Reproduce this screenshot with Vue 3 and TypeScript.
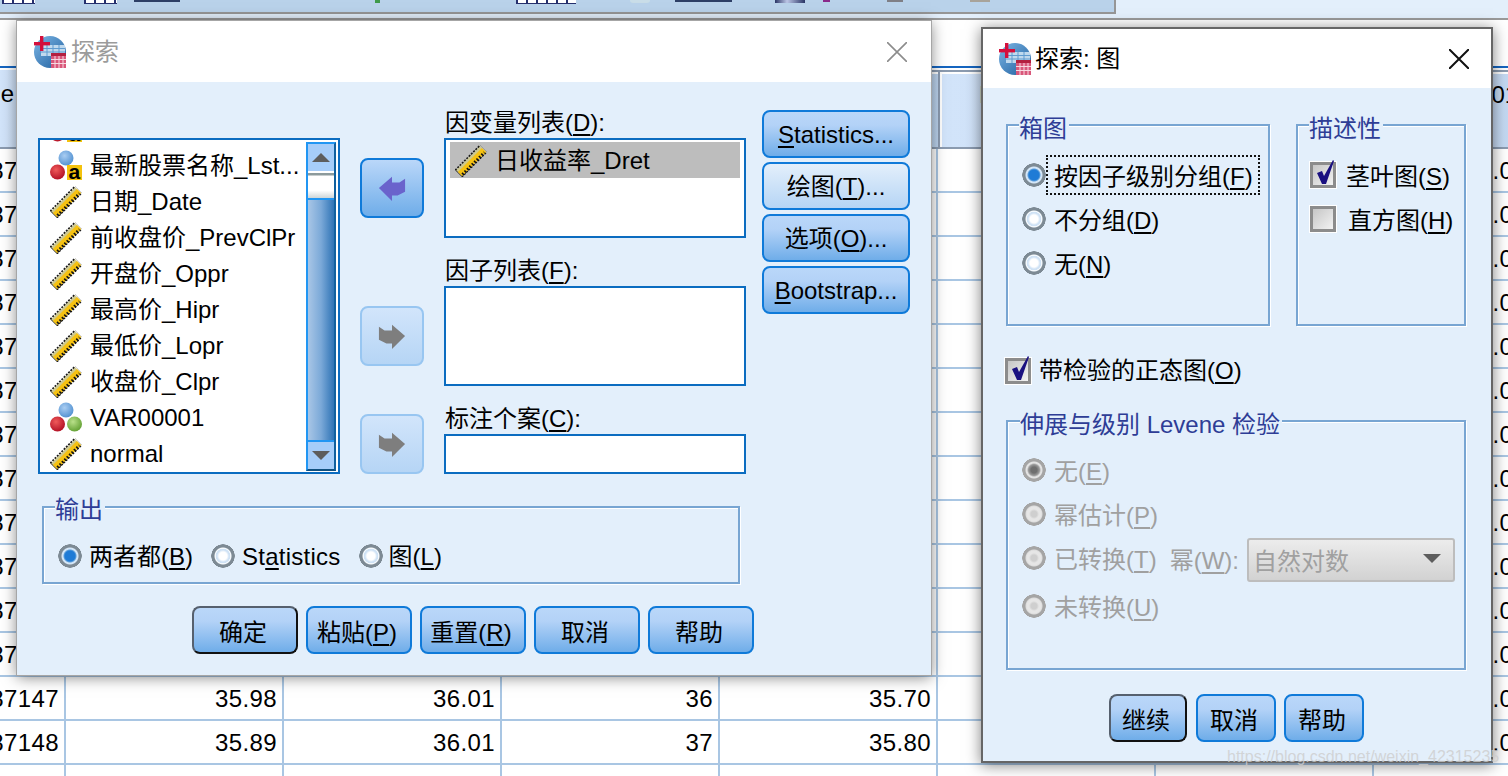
<script setup lang="ts">
interface Row { id: number; cells: string[] }
interface Item { icon: string; text: string }

const headers: string[] = ['Name', '', '', '', '', 'Dmrtnd_Dret', '', 'VAR00001']
const second: string[] = ['34', '32', '33', '34', '35', '35', '36', '37', '33', '39', '30', '35', '32', '33']
const rows: Row[] = second.map((d, i) => ({
  id: 87135 + i,
  cells: i === 12
    ? ['35.98', '36.01', '36', '35.70', '', '', d + '.01']
    : i === 13
      ? ['35.89', '36.01', '37', '35.80', '', '', d + '.01']
      : ['', '', '', '', '', '', d + '.01']
}))

const items: Item[] = [
  { icon: '#nom-a', text: '最新股票名称_Lst...' },
  { icon: '#ruler', text: '日期_Date' },
  { icon: '#ruler', text: '前收盘价_PrevClPr' },
  { icon: '#ruler', text: '开盘价_Oppr' },
  { icon: '#ruler', text: '最高价_Hipr' },
  { icon: '#ruler', text: '最低价_Lopr' },
  { icon: '#ruler', text: '收盘价_Clpr' },
  { icon: '#nom', text: 'VAR00001' },
  { icon: '#ruler', text: 'normal' }
]
</script>

<template>
  <div class="page">
    <svg class="defs" aria-hidden="true">
      <defs>
        <linearGradient id="ball" x1="0" y1="0" x2="1" y2="1">
          <stop offset="0" stop-color="#7db7e6" />
          <stop offset="1" stop-color="#1c5c9c" />
        </linearGradient>
        <radialGradient id="blue" cx=".4" cy=".35" r=".7">
          <stop offset="0" stop-color="#a9cdf2" />
          <stop offset="1" stop-color="#4f8fd0" />
        </radialGradient>
        <radialGradient id="red" cx=".4" cy=".35" r=".7">
          <stop offset="0" stop-color="#ef5a5a" />
          <stop offset="1" stop-color="#b00d22" />
        </radialGradient>
        <radialGradient id="green" cx=".4" cy=".35" r=".7">
          <stop offset="0" stop-color="#b9e08a" />
          <stop offset="1" stop-color="#5f9e2f" />
        </radialGradient>
        <symbol id="spss" viewBox="0 0 34 34">
          <circle cx="17" cy="17" r="16" fill="url(#ball)" />
          <rect x="8" y="10" width="24" height="11" fill="#d5e7f6" opacity=".85" />
          <path d="M8 13.5h24M8 17h24M14 10v11M20 10v11M26 10v11" stroke="#5f9bd0" stroke-width="1" />
          <rect x="7" y="1" width="3.4" height="15" fill="#d40f3c" />
          <rect x="1" y="7" width="16" height="3.4" fill="#d40f3c" />
          <rect x="18" y="18" width="15" height="15" fill="#d9577a" />
          <rect x="18" y="18" width="15" height="3" fill="#b3203f" />
          <path d="M18 24.5h15M18 28.5h15M22 21v12M26 21v12M30 21v12" stroke="#f7d9e1" stroke-width="1" />
        </symbol>
        <symbol id="ruler" viewBox="0 0 32 32">
          <path d="M3.5 28.5L28.5 3.5" stroke="#1a1a1a" stroke-width="11" stroke-dasharray="2 1.2" />
          <path d="M4 28L28 4" stroke="#cfc98e" stroke-width="8" />
          <path d="M5 29L29 5" stroke="#f6c212" stroke-width="6" />
          <path d="M7.5 29.5L29.5 7.5" stroke="#111" stroke-width="3" stroke-dasharray="1.6 1.8" />
        </symbol>
        <symbol id="nom-a" viewBox="0 0 32 32">
          <circle cx="16" cy="8" r="7.5" fill="url(#blue)" />
          <circle cx="7.5" cy="22" r="7.5" fill="url(#red)" />
          <rect x="17" y="15" width="15" height="15" fill="#f4c20d" />
          <text x="18.5" y="29" class="badge">a</text>
        </symbol>
        <symbol id="nom" viewBox="0 0 32 32">
          <circle cx="16" cy="8" r="7.5" fill="url(#blue)" />
          <circle cx="7.5" cy="22" r="7.5" fill="url(#red)" />
          <circle cx="24.5" cy="22" r="7.5" fill="url(#green)" />
        </symbol>
        <symbol id="arrow" viewBox="0 0 64 60">
          <path d="M18 30L32 18V24H40L46 20V34L38 38H32V44Z" />
        </symbol>
      </defs>
    </svg>

    <!-- background application window -->
    <div class="band">
      <div class="toolbar">
        <i class="stub grid s1"></i>
        <i class="stub grid s2"></i>
        <i class="stub bar s3"></i>
        <i class="stub tick s4"></i>
        <i class="stub grid s5"></i>
        <i class="stub round s6"></i>
        <i class="stub bar s7"></i>
        <i class="stub mono s8"></i>
        <i class="stub purple s9"></i>
        <i class="stub gray s10"></i>
        <i class="stub tan s11"></i>
      </div>
    </div>
    <div class="blank"></div>
    <div class="blueline"></div>
    <div class="sheet">
      <div v-for="(h, i) in headers" :key="i" class="th">{{ h }}</div>
      <template v-for="r in rows" :key="r.id">
        <div class="td">{{ r.id }}</div>
        <div v-for="(c, i) in r.cells" :key="i" class="td">{{ c }}</div>
      </template>
      <div v-for="n in 8" :key="'e' + n" class="td"></div>
    </div>

    <!-- 探索 -->
    <section class="win main">
      <header class="title dim">
        <svg class="appicon"><use href="#spss" /></svg>
        <span>探索</span>
        <svg class="close" viewBox="0 0 20 20"><path d="M0 0L20 20M20 0L0 20" /></svg>
      </header>
      <div class="body mainbody">
        <div class="top">
          <div class="srcwrap">
            <div class="box src">
              <div class="rows">
                <div class="var ghost"><svg class="vicon"><use href="#nom-a" /></svg></div>
                <div v-for="it in items" :key="it.text" class="var">
                  <svg class="vicon"><use :href="it.icon" /></svg>
                  <span>{{ it.text }}</span>
                </div>
              </div>
              <div class="scroll">
                <div class="sbtn"><i class="tri up"></i></div>
                <div class="thumb"></div>
                <div class="track"></div>
                <div class="sbtn"><i class="tri down"></i></div>
              </div>
            </div>
          </div>
          <div class="arrows">
            <button class="abtn on"><svg class="aicon"><use href="#arrow" /></svg></button>
            <button class="abtn off b2"><svg class="aicon flip"><use href="#arrow" /></svg></button>
            <button class="abtn off b3"><svg class="aicon flip"><use href="#arrow" /></svg></button>
          </div>
          <div class="targets">
            <div class="flabel">因变量列表(<u>D</u>):</div>
            <div class="box t1">
              <div class="sel">
                <svg class="vicon"><use href="#ruler" /></svg>
                <span>日收益率_Dret</span>
              </div>
            </div>
            <div class="flabel next">因子列表(<u>F</u>):</div>
            <div class="box t1"></div>
            <div class="flabel next">标注个案(<u>C</u>):</div>
            <div class="box t3"></div>
          </div>
          <div class="side">
            <button class="btn side-btn"><u>S</u>tatistics...</button>
            <button class="btn side-btn pale">绘图(<u>T</u>)...</button>
            <button class="btn side-btn">选项(<u>O</u>)...</button>
            <button class="btn side-btn"><u>B</u>ootstrap...</button>
          </div>
        </div>
        <div class="group output">
          <span class="legend">输出</span>
          <div class="outrow">
            <label class="opt"><i class="radio checked"></i><span>两者都(<u>B</u>)</span></label>
            <label class="opt"><i class="radio"></i><span class="wide">St<u>a</u>tistics</span></label>
            <label class="opt narrow"><i class="radio"></i><span>图(<u>L</u>)</span></label>
          </div>
        </div>
        <div class="actions main-actions">
          <button class="btn act w106 def">确定</button>
          <button class="btn act w106">粘贴(<u>P</u>)</button>
          <button class="btn act w106">重置(<u>R</u>)</button>
          <button class="btn act w106">取消</button>
          <button class="btn act w106">帮助</button>
        </div>
      </div>
    </section>

    <!-- 探索: 图 -->
    <section class="win plots">
      <header class="title plots-title">
        <svg class="appicon"><use href="#spss" /></svg>
        <span>探索: 图</span>
        <svg class="close dark" viewBox="0 0 20 20"><path d="M0 0L20 20M20 0L0 20" /></svg>
      </header>
      <div class="body plotbody">
        <div class="pair">
          <div class="group boxplot">
            <span class="legend">箱图</span>
            <label class="line"><i class="radio checked"></i><span class="cap focus">按因子级别分组(<u>F</u>)</span></label>
            <label class="line"><i class="radio"></i><span class="cap">不分组(<u>D</u>)</span></label>
            <label class="line"><i class="radio"></i><span class="cap">无(<u>N</u>)</span></label>
          </div>
          <div class="group descr">
            <span class="legend">描述性</span>
            <label class="line">
              <i class="check">
                <svg viewBox="0 0 22 22"><path d="M3 11L8 9L10 14L19 -2L20 -1L12 22H8Z" /></svg>
              </i>
              <span class="cap c10">茎叶图(<u>S</u>)</span>
            </label>
            <label class="line"><i class="check"></i><span class="cap c12">直方图(<u>H</u>)</span></label>
          </div>
        </div>
        <label class="normal">
          <i class="check">
            <svg viewBox="0 0 22 22"><path d="M3 11L8 9L10 14L19 -2L20 -1L12 22H8Z" /></svg>
          </i>
          <span>带检验的正态图(<u>O</u>)</span>
        </label>
        <div class="group levene">
          <span class="legend">伸展与级别 Levene 检验</span>
          <label class="line off-line"><i class="radio dis-on"></i><span class="cap">无(<u>E</u>)</span></label>
          <label class="line off-line"><i class="radio dis"></i><span class="cap">幂估计(<u>P</u>)</span></label>
          <div class="line off-line">
            <i class="radio dis"></i><span class="cap">已转换(<u>T</u>)</span>
            <span class="power">幂(<u>W</u>):</span>
            <div class="combo"><span class="combo-text">自然对数</span><i class="tri down combo-tri"></i></div>
          </div>
          <label class="line off-line last"><i class="radio dis"></i><span class="cap">未转换(<u>U</u>)</span></label>
        </div>
        <div class="actions plot-actions">
          <button class="btn act w78 def">继续</button>
          <button class="btn act w80">取消</button>
          <button class="btn act w80">帮助</button>
        </div>
      </div>
    </section>

    <span class="mark">https://blog.csdn.net/weixin_42315235</span>
  </div>
</template>

<style>
html, body { margin: 0; background: #fff; }
</style>

<style scoped>
.page {
  position: relative;
  width: 1508px;
  height: 776px;
  overflow: hidden;
  background: #fff;
  color: #000;
  font: 24px/28px "Liberation Sans", "Noto Sans CJK SC", sans-serif;
}
.defs { position: absolute; width: 0; height: 0; }
.badge { font: bold 21px "Liberation Sans", sans-serif; fill: #000; }
u { text-underline-offset: 3px; text-decoration-thickness: 2px; }

/* background */
.band { height: 18px; background: #e3effb; border-bottom: 2px solid #9a9a9a; }
.toolbar {
  display: flex;
  align-items: flex-start;
  box-sizing: border-box;
  width: 1116px;
  height: 14px;
  background: #b9d2ea;
  border-right: 2px solid #969696;
  border-bottom: 2px solid #969696;
}
.stub { display: block; flex: none; height: 3px; }
.grid { background: repeating-linear-gradient(90deg, #26306e 0 2px, #fff 2px 10px); border-bottom: 1px solid #26306e; }
.bar { height: 2px; background: #2d3f66; }
.tick { background: #3f9a4a; }
.round { background: #c9dde8; border-radius: 0 0 10px 10px; }
.mono { background: linear-gradient(90deg, #2a3566, #bcc6e6 40%, #2a3566); }
.purple { height: 2px; background: #8a2a8a; }
.gray { height: 2px; background: #7f7f86; }
.tan { height: 2px; background: #a8a39a; }
.s1 { margin-left: 2px; width: 33px; }
.s2 { margin-left: 49px; width: 33px; }
.s3 { margin-left: 17px; width: 46px; }
.s4 { margin-left: 195px; width: 5px; }
.s5 { margin-left: 136px; width: 60px; }
.s6 { margin-left: 54px; width: 20px; }
.s7 { margin-left: 25px; width: 57px; }
.s8 { margin-left: 43px; width: 30px; }
.s9 { margin-left: 18px; width: 7px; }
.s10 { margin-left: 57px; width: 16px; }
.s11 { margin-left: 67px; width: 20px; }

.blank { height: 46px; background: #fff; }
.blueline { height: 2px; background: #1565c0; margin-bottom: 2px; }
.sheet {
  display: grid;
  width: 1534px;
  grid-template-columns: 66px repeat(6, 218px) 160px;
  grid-template-rows: 79px;
  grid-auto-rows: 44px;
}
.th {
  box-sizing: border-box;
  display: flex;
  align-items: center;
  justify-content: center;
  padding-bottom: 30px;
  background: linear-gradient(90deg, #d2e4fa, #d0e2f9 55%, #bcd3ee);
  border: 2px solid #8b9bb0;
  border-right: 0;
  box-shadow: inset 2px 2px 0 #fff;
  white-space: nowrap;
  overflow: hidden;
}
.th:first-child {
  justify-content: flex-end;
  padding-right: 52px;
  overflow: visible;
  border-width: 0 0 2px;
  box-shadow: none;
}
.th:nth-child(8) { padding-left: 12px; }
.td {
  box-sizing: border-box;
  display: flex;
  align-items: center;
  justify-content: flex-end;
  padding: 1px 5px 0 0;
  letter-spacing: .4px;
  background: #fff;
  border-right: 2px solid #a9c6e3;
  border-bottom: 2px solid #a9c6e3;
  white-space: nowrap;
}

/* windows */
.win { position: absolute; box-sizing: border-box; display: flex; flex-direction: column; background: #e3effb; }
.main {
  left: 17px; top: 21px; width: 914px; height: 654px;
  box-shadow: 0 0 0 1px #a6a6a6, 0 2px 14px rgba(0, 0, 0, .5);
}
.plots {
  left: 981px; top: 27px; width: 512px; height: 736px;
  border: 2px solid #666;
  box-shadow: 0 2px 14px rgba(0, 0, 0, .5);
}
.title { display: flex; align-items: center; height: 61px; background: #fff; flex: none; }
.dim { color: #9b9b9b; padding-left: 16px; }
.plots-title { height: 59px; padding-left: 15px; }
.appicon { width: 34px; height: 34px; margin-right: 4px; flex: none; }
.plots-title .appicon { margin-right: 3px; }
.close { width: 20px; height: 20px; margin-left: auto; margin-right: 24px; flex: none; }
.close path { stroke: #8c8c8c; stroke-width: 1.6; fill: none; }
.close.dark { margin-right: 22px; }
.close.dark path { stroke: #111; stroke-width: 2; }

.body { flex: 1; }
.mainbody { padding: 28px 0 0 21px; }
.top { display: flex; height: 364px; }
.srcwrap { padding-top: 28px; width: 302px; flex: none; }
.box { box-sizing: border-box; border: 2px solid #0b6cc0; background: #fff; }
.src { height: 336px; display: flex; overflow: hidden; }
.rows { flex: 1; min-width: 0; }
.var {
  display: flex;
  align-items: center;
  height: 36px;
  padding-left: 10px;
  white-space: nowrap;
}
.var.ghost { align-items: flex-start; height: 32px; margin: -28px 0 4px; }
.vicon { width: 32px; height: 32px; flex: none; margin-right: 8px; }

.scroll {
  width: 30px;
  flex: none;
  margin: 2px 2px 1px 0;
  display: flex;
  flex-direction: column;
  box-sizing: border-box;
  border-left: 2px solid #2196f3;
  border-right: 2px solid #10609f;
  border-bottom: 2px solid #10507f;
  border-top: 2px solid #2196f3;
}
.sbtn { height: 27px; flex: none; background: #a6cdf9; display: flex; align-items: center; justify-content: center; }
.thumb {
  height: 25px;
  flex: none;
  margin-top: 2px;
  background: linear-gradient(180deg, #8c9a9c 0 2px, #fff 3px, #fff 70%, #cfd6d8);
  border-bottom: 2px solid #2196f3;
}
.track { flex: 1; background: linear-gradient(90deg, #a9c6e6, #7ba9d8 50%, #2e73b5); border-bottom: 2px solid #2196f3; }
.tri { display: block; width: 0; height: 0; border-left: 9px solid transparent; border-right: 9px solid transparent; }
.tri.up { border-bottom: 9px solid #5d5d5d; }
.tri.down { border-top: 9px solid #5d5d5d; }

.arrows { margin-left: 20px; width: 64px; flex: none; padding-top: 48px; display: flex; flex-direction: column; }
.abtn { box-sizing: border-box; width: 64px; height: 60px; padding: 0; border-radius: 8px; display: block; }
.abtn.on { border: 2px solid #0f7ad9; background: linear-gradient(180deg, #bad7f9, #6fade9); }
.abtn.off { border: 2px solid #98c6f1; background: linear-gradient(180deg, #d2e5fb, #b6d5f5); }
.b2 { margin-top: 88px; }
.b3 { margin-top: 48px; }
.aicon { width: 60px; height: 56px; display: block; fill: #6a63cc; }
.aicon.flip { transform: scaleX(-1); fill: #7e7e7e; }

.targets { margin-left: 20px; width: 302px; flex: none; }
.flabel { height: 28px; line-height: 26px; padding-left: 1px; white-space: nowrap; }
.flabel.next { margin-top: 20px; }
.t1 { height: 100px; padding: 2px 4px; }
.t3 { height: 40px; }
.sel { display: flex; align-items: center; height: 36px; background: #bdbdbd; padding: 1px 0 0 5px; width: 290px; box-sizing: border-box; }
.sel .vicon { margin-right: 8px; }

.side { margin-left: 16px; width: 148px; flex: none; display: flex; flex-direction: column; gap: 4px; }
.btn {
  box-sizing: border-box;
  height: 48px;
  padding: 2px 0 0;
  border: 2px solid #0f7ad9;
  border-radius: 8px;
  background: linear-gradient(180deg, #bad7f9 0, #b3d2f7 30%, #6fade9 100%);
  font: inherit;
  color: #000;
  white-space: nowrap;
  flex: none;
  display: block;
}
.act { padding: 6px 4px 0 0; }
.side-btn { width: 148px; }
.pale { background: linear-gradient(180deg, #e3effb, #b6d5f5); }
.def { border-color: #56606e #111 #111 #56606e; }

.group {
  position: relative;
  box-sizing: border-box;
  border: 2px solid #78a5d2;
  box-shadow: inset 1px 1px 0 #fff, 1px 1px 0 #fff;
}
.legend {
  position: absolute;
  top: -12px;
  left: 11px;
  padding: 0 2px 0 0;
  background: #e3effb;
  color: #2e3d96;
  white-space: nowrap;
}
.plotbody .legend { top: -11px; }
.output { margin: 32px 0 0 4px; width: 698px; height: 78px; padding: 34px 0 0 14px; }
.outrow { display: flex; align-items: center; gap: 18px; height: 28px; }
.opt { display: flex; align-items: center; gap: 7px; }
.opt > span { padding-top: 2px; }
.opt .wide { letter-spacing: .25px; }
.narrow { gap: 6px; }
.radio { display: block; flex: none; width: 24px; height: 24px; border-radius: 50%;
  background: radial-gradient(circle, #fff 0 4px, #cfe2f5 6px 7px, #f4f9fd 7.5px 8px, #7d8a94 9px 11.5px, transparent 12px);
}
.radio.checked { background: radial-gradient(circle, #1f7bd6 0 5px, #5b9edc 6px, #d4e6f7 7px 8px, #7d8a94 9px 11.5px, transparent 12px); }
.radio.dis { background: radial-gradient(circle, #cfcfcf 0 3px, #e6e6e6 5px 7px, #dcdcdc 8px, #a5a5a5 9px 11.5px, transparent 12px); }
.radio.dis-on { background: radial-gradient(circle, #6f6f6f 0 3px, #9a9a9a 5.5px, #e3e3e3 7px 8px, #a5a5a5 9px 11.5px, transparent 12px); }

.actions { display: flex; }
.main-actions { margin: 22px 0 0 154px; gap: 8px; }
.w106 { width: 106px; }
.w78 { width: 78px; }
.w80 { width: 80px; }

/* plots dialog */
.plotbody { padding: 36px 0 0 23px; }
.pair { display: flex; gap: 26px; }
.boxplot { width: 264px; height: 202px; padding: 27px 0 0 14px; }
.descr { width: 170px; height: 202px; padding: 27px 0 0 12px; }
.line { display: flex; align-items: center; height: 44px; white-space: nowrap; }
.cap { box-sizing: border-box; display: flex; align-items: center; height: 40px; padding: 4px 7px 0 8px; }
.cap.focus { outline: 2px dotted #111; outline-offset: -2px; }
.cap.c10 { padding-left: 10px; }
.cap.c12 { padding-left: 12px; }
.check {
  display: block;
  flex: none;
  box-sizing: border-box;
  width: 26px;
  height: 26px;
  padding: 1px;
  border: 3px solid #8c8c8c;
  background: linear-gradient(135deg, #c6c6c6, #f2f2f2);
  box-shadow: 0 0 0 1px #fff;
}
.check svg { display: block; width: 22px; height: 22px; margin: -4px 0 0 0; overflow: visible; fill: #1a1080; }
.normal { display: flex; align-items: center; gap: 8px; height: 26px; margin: 32px 0 0 -1px; }
.levene { width: 460px; height: 250px; margin-top: 36px; padding: 26px 0 0 14px; }
.levene .legend { left: 12px; }
.off-line { color: #a0a0a0; }
.last { margin-top: 4px; }
.power { margin-left: 6px; padding-top: 6px; }
.combo {
  box-sizing: border-box;
  width: 208px;
  height: 44px;
  margin-left: 8px;
  padding-left: 4px;
  display: flex;
  align-items: center;
  justify-content: space-between;
  border: 2px solid #bdbdbd;
  border-radius: 3px;
  background: linear-gradient(180deg, #ececec, #d2d2d2);
  position: relative;
  top: 2px;
}
.combo-text { padding-top: 4px; }
.combo-tri { margin: -4px 12px 0 0; border-top-color: #9a9a9a; }
.plot-actions { margin: 24px 0 0 103px; gap: 9px; }
.plot-actions .btn:last-child { margin-left: -1px; }

.mark {
  position: absolute;
  left: 1227px;
  top: 746px;
  font-size: 16px;
  line-height: 22px;
  color: rgba(205, 205, 205, .8);
  white-space: nowrap;
}
</style>
